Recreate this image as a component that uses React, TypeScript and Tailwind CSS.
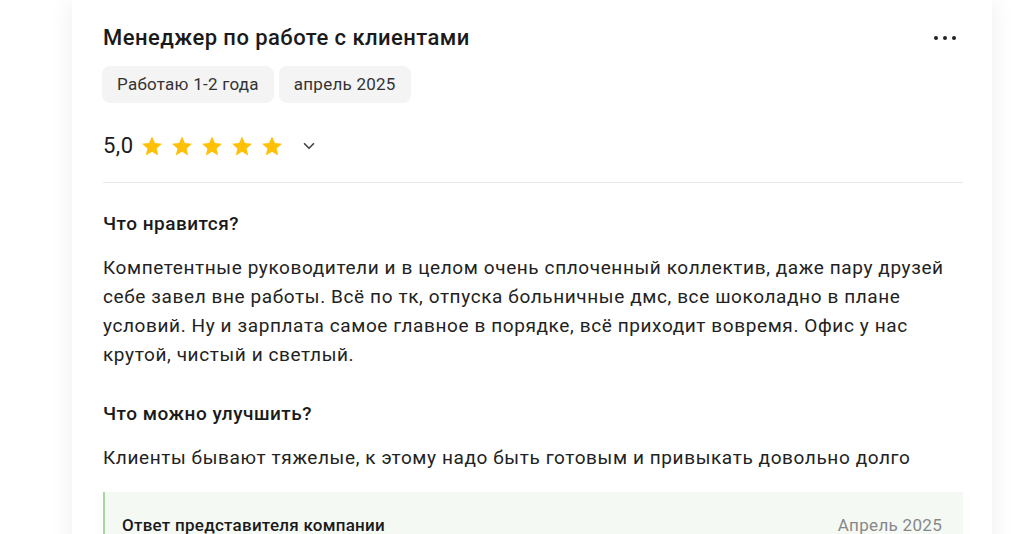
import React from 'react';
import { ChevronDown } from 'lucide-react';

const Star: React.FC = () => (
  <svg viewBox="0 0 24 24" className="w-[24px] h-[24px]" fill="#ffc107">
    <path d="M12 2.5l2.9 6.6 7.1.6-5.4 4.7 1.6 7-6.2-3.7-6.2 3.7 1.6-7L2 9.7l7.1-.6z" />
  </svg>
);

const App: React.FC = () => {
  return (
    <div className="min-h-screen bg-white font-['Roboto','Liberation_Sans',sans-serif] text-[#1a1a1a]">
      <div className="ml-[72px] w-[920px] bg-white shadow-[0_0_24px_rgba(0,0,0,0.07)] pl-[31px] pr-[29px] pt-[24px] pb-[40px]">
        <div className="flex items-center justify-between pr-[6px]">
          <h2 className="text-[22px] leading-[28px] font-medium tracking-[0.45px]">Менеджер по работе с клиентами</h2>
          <div className="flex gap-[5px] mr-[1px]">
            <span className="w-[4px] h-[4px] rounded-full bg-[#222]" />
            <span className="w-[4px] h-[4px] rounded-full bg-[#222]" />
            <span className="w-[4px] h-[4px] rounded-full bg-[#222]" />
          </div>
        </div>

        <div className="flex gap-[5px] mt-[14px] -ml-px">
          <span className="h-[37px] px-[15px] flex items-center rounded-[8px] bg-[#f4f4f4] text-[17px] tracking-[0.25px] text-[#333]">Работаю 1-2 года</span>
          <span className="h-[37px] px-[15px] flex items-center rounded-[8px] bg-[#f4f4f4] text-[17px] tracking-[0.25px] text-[#333]">апрель 2025</span>
        </div>

        <div className="flex items-center mt-[28px] h-[30px]">
          <span className="text-[22px] leading-[30px] tracking-[0.5px] mr-[6px]">5,0</span>
          <div className="flex gap-[6px]">
            <Star />
            <Star />
            <Star />
            <Star />
            <Star />
          </div>
          <ChevronDown className="w-[18px] h-[18px] ml-[16px] text-[#444]" strokeWidth={2.2} />
        </div>

        <div className="h-px bg-[#e8e8e8] mt-[21px]" />

        <h3 className="mt-[29px] text-[19px] leading-[24px] font-medium tracking-[0.5px]">Что нравится?</h3>
        <p className="mt-[17px] text-[19px] leading-[29px] tracking-[0.6px] text-[#222]">
          Компетентные руководители и в целом очень сплоченный коллектив, даже пару друзей себе завел вне работы. Всё по тк, отпуска больничные дмс, все шоколадно в плане условий. Ну и зарплата самое главное в порядке, всё приходит вовремя. Офис у нас крутой, чистый и светлый.
        </p>

        <h3 className="mt-[33px] text-[19px] leading-[24px] font-medium tracking-[0.5px]">Что можно улучшить?</h3>
        <p className="mt-[17px] text-[19px] leading-[29px] tracking-[0.6px] text-[#222]">
          Клиенты бывают тяжелые, к этому надо быть готовым и привыкать довольно долго
        </p>

        <div className="mt-[20px] bg-[#f5f9f4] border-l-2 border-[#a8d5a2] pl-[17px] pr-[21px] pt-[22px] pb-[22px]">
          <div className="flex items-center justify-between">
            <span className="text-[17px] leading-[22px] font-medium tracking-[0.25px]">Ответ представителя компании</span>
            <span className="text-[17px] leading-[22px] tracking-[0.3px] text-[#888]">Апрель 2025</span>
          </div>
        </div>
      </div>
    </div>
  );
};

export default App;
